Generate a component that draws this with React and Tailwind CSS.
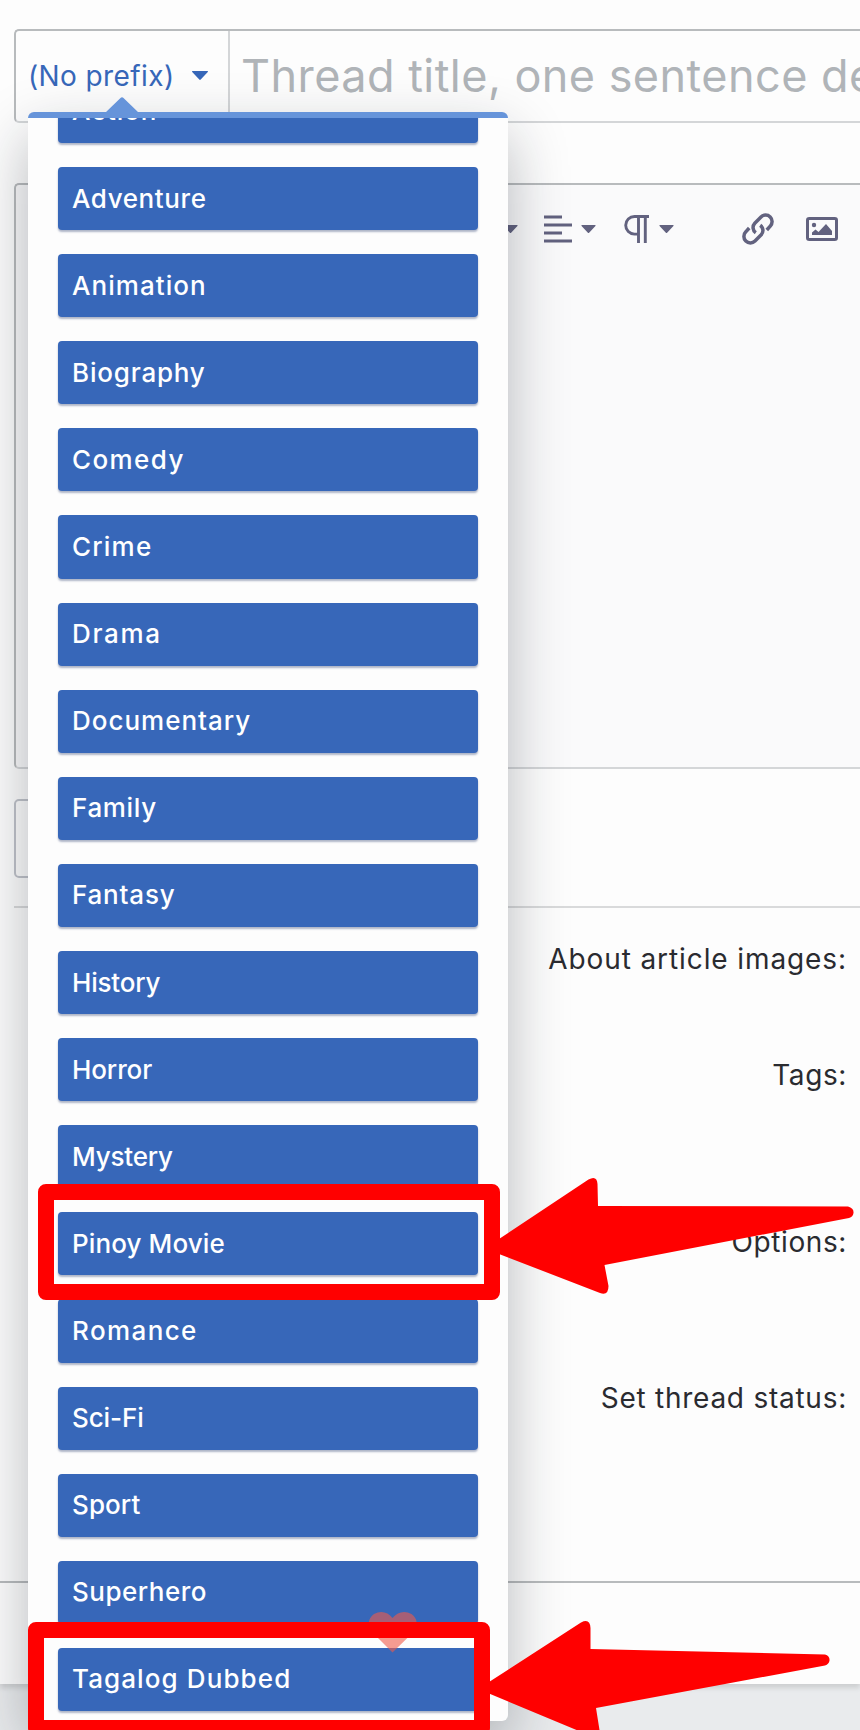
import { clsx } from "clsx";

const PREFIXES = [
  { label: "Action", tracking: "tracking-[0.9px]" },
  { label: "Adventure", tracking: "tracking-[0.6px]" },
  { label: "Animation", tracking: "tracking-[1.05px]" },
  { label: "Biography", tracking: "tracking-[0.8px]" },
  { label: "Comedy", tracking: "tracking-[1.4px]" },
  { label: "Crime", tracking: "tracking-[1.2px]" },
  { label: "Drama", tracking: "tracking-[1.7px]" },
  { label: "Documentary", tracking: "tracking-[1px]" },
  { label: "Family", tracking: "tracking-[0.65px]" },
  { label: "Fantasy", tracking: "tracking-[0.8px]" },
  { label: "History", tracking: "tracking-[-0.2px]" },
  { label: "Horror", tracking: "tracking-[-0.1px]" },
  { label: "Mystery", tracking: "tracking-[-0.2px]" },
  { label: "Pinoy Movie", tracking: "tracking-[0.1px]" },
  { label: "Romance", tracking: "tracking-[1.4px]" },
  { label: "Sci-Fi", tracking: "tracking-[-0.1px]" },
  { label: "Sport", tracking: "tracking-[0.1px]" },
  { label: "Superhero", tracking: "tracking-[0.5px]" },
  { label: "Tagalog Dubbed", tracking: "tracking-[1.1px]" },
];

const FIELDS = [
  { label: "About article images:", row: "h-[116px]", tracking: "tracking-[0.9px]" },
  { label: "Tags:", row: "h-[167px]", tracking: "tracking-[0.6px]" },
  { label: "Options:", row: "h-[156px]", tracking: "tracking-[0.6px]" },
  { label: "Set thread status:", row: "h-[204px]", tracking: "tracking-[0.750px]" },
];

function Caret({ className }) {
  return (
    <svg className={className} viewBox="0 0 16 9" fill="currentColor">
      <path d="M.6 0h14.800c.6 0 .8.600.4 1L8.700 8.600c-.4.500-1 .5-1.400 0L.2 1C-.2.600 0 0 .6 0z" />
    </svg>
  );
}

function Toolbar() {
  return (
    <div className="flex h-[88px] items-center pl-[487px] text-[#62627f]">
      <Caret className="h-2 w-[15px] shrink-0" />
      <svg className="ml-[26px] h-7 w-7 shrink-0" viewBox="0 0 28 28" fill="none" stroke="currentColor" strokeWidth="2.8">
        <path d="M0 2h18M0 10h28M0 18h18M0 26h28" />
      </svg>
      <Caret className="ml-[9px] h-2 w-[15px] shrink-0" />
      <svg className="ml-7 h-7 w-[25px] shrink-0" viewBox="0 0 25 28" fill="none" stroke="currentColor" strokeWidth="2.9">
        <path d="M25 1.500H10.500a8.800 8.800 0 0 0 0 17.600H14M14.500 1.500V28M21.300 1.500V28" />
      </svg>
      <Caret className="ml-2.5 h-2 w-[15px] shrink-0" />
      <svg className="ml-[68px] h-8 w-8 shrink-0" viewBox="0 0 32 32" fill="none" stroke="currentColor" strokeWidth="3.5">
        <path d="M13.800 19.800a6.400 6.400 0 0 1-1-9.600l6.200-6.200a6.400 6.400 0 0 1 9.200 9.200L24.800 17M18.200 12.200a6.400 6.400 0 0 1 1 9.600L13 28a6.400 6.400 0 0 1-9.200-9.200L7.200 15" />
      </svg>
      <svg className="ml-8 h-6 w-8 shrink-0" viewBox="0 0 32 24" fill="none" stroke="currentColor" strokeWidth="3">
        <rect x="1.500" y="1.500" width="29" height="21" rx="1.800" />
        <path d="M6 18v-2.500l3.500-3 3 2.500L20 7l6 7v4z" fill="currentColor" stroke="none" />
        <circle cx="8" cy="8" r="2.200" fill="currentColor" stroke="none" />
      </svg>
    </div>
  );
}

function PrefixMenu() {
  return (
    <div className="absolute top-[112px] left-7 h-[1609px] w-[480px] rounded-[6px] border-t-[6px] border-[#6694da] bg-[#fdfdfd] shadow-[0_24px_60px_rgba(20,25,35,0.3)]">
      <svg className="absolute -top-[21px] left-[78px] h-[15px] w-8" viewBox="0 0 32 15" fill="#6694da">
        <path d="M0 15 14.500 1Q16-.5 17.500 1L32 15z" />
      </svg>
      <div className="h-full overflow-hidden px-[30px]">
        <div className="-mt-[38.100px] flex flex-col gap-6">
          {PREFIXES.map((p) => (
            <button
              key={p.label}
              type="button"
              className={clsx(
                "flex h-[63.120px] w-[420px] shrink-0 items-center rounded-[4px] bg-[#3767b9] pb-[1px] pl-[14px] text-left text-[26px] font-medium whitespace-nowrap text-white shadow-[0_2px_2px_rgba(30,50,100,0.35)]",
                p.tracking
              )}
            >
              {p.label}
            </button>
          ))}
        </div>
      </div>
    </div>
  );
}

function Annotations() {
  return (
    <svg className="pointer-events-none absolute inset-0 h-[1730px] w-[860px]" viewBox="0 0 860 1730" fill="red">
      <path
        d="M392.500 1652.500 372 1632c-5-6-4-14 2-18 7-4 14-2 18.500 4 5-6 12-8 19-4 6 4 7 12 2 18z"
        fill="#f05a4a"
        opacity="0.6"
      />
      <g fill="none" stroke="red" strokeWidth="16" strokeLinejoin="round">
        <rect x="46" y="1192" width="446" height="100" />
        <rect x="36" y="1630" width="446" height="98" />
      </g>
      <path d="M499 1239 588.500 1179.500Q597 1175 597.500 1184L598 1206 848 1206.500Q854 1208 853.500 1213 853 1217 849 1218L604.500 1265 608.500 1286Q608.500 1296 600 1293L499 1254Z" />
      <path d="M489 1682 581 1622.500Q590 1618 590.500 1628V1649L825 1654.500Q830 1656 829.500 1660.500 829 1664 825 1665.500L596 1708 599.500 1730H576.500L489 1693.500Z" />
    </svg>
  );
}

export default function App() {
  return (
    <main className="relative h-[1730px] w-[860px] overflow-hidden bg-[#e9ebed] font-[Inter,'Liberation_Sans',sans-serif] text-[#2a2b30]">
      <div className="h-[1684px] bg-[#fdfdfd] pt-[29px] shadow-[0_4px_5px_rgba(0,0,0,0.12)]">
        {/* title row */}
        <div className="ml-[14px] flex h-[94px] rounded-l-[5px] border-2 border-r-0 border-[#d4d6d8] border-t-[#b8bbbd] border-l-[#b8bbbd]">
          <button type="button" className="flex w-[214px] shrink-0 items-center border-r-2 border-[#d4d6d8] pb-[1px] pl-[12px] text-[28px] tracking-[0.4px] whitespace-nowrap text-[#3767b9]">
            (No prefix)
            <Caret className="ml-[17px] h-[9px] w-4 shrink-0" />
          </button>
          <div className="flex items-center overflow-hidden pb-[1px] pl-[11px] text-[45px] tracking-[0.45px] whitespace-nowrap text-[#b0b4b8]">
            Thread title, one sentence description
          </div>
        </div>

        {/* editor */}
        <div className="mt-[60px] ml-[14px] h-[586px] rounded-l-[5px] border-2 border-r-0 border-[#d4d6d8] border-t-[#b8bbbd] border-l-[#b8bbbd] bg-[#fafafb]">
          <Toolbar />
        </div>
        <div className="mt-[30px] ml-[14px] h-[79px] w-[200px] rounded-[5px] border-2 border-[#c0c3ca]" />

        <div className="mt-[28px] ml-[14px] border-t-2 border-[#d9dadb] pt-[33px] pr-[13px] text-[28px]">
          {FIELDS.map((f) => (
            <div key={f.label} className={clsx("flex justify-end leading-[36px] whitespace-nowrap", f.row, f.tracking)}>
              {f.label}
            </div>
          ))}
        </div>
        <div className="-mt-[3px] border-t-2 border-[#b8bbbd]" />
      </div>

      <PrefixMenu />
      <Annotations />
    </main>
  );
}
